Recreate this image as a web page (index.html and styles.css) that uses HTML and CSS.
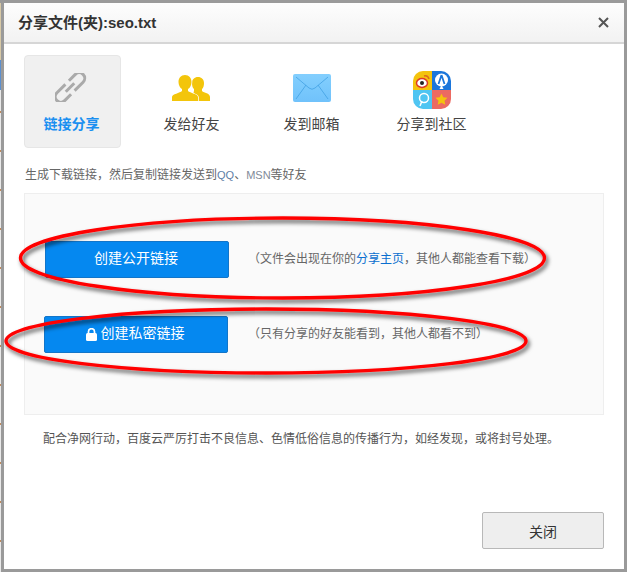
FILE: index.html
```html
<!DOCTYPE html>
<html lang="zh-CN">
<head>
<meta charset="utf-8">
<title>分享文件(夹):seo.txt</title>
<link rel="stylesheet" href="styles.css">
</head>
<body>
<div class="dialog">
  <header class="head">
    <h1 class="title">分享文件(夹):seo.txt</h1>
    <svg class="close" viewBox="0 0 11 11" width="11" height="11"><path d="M1 1l9 9M10 1l-9 9" stroke="#555" stroke-width="2" fill="none"/></svg>
  </header>
  <main class="body">
    <nav class="tabs">
      <div class="tab active">
        <div class="ico-box"><svg class="ico ico-link" width="33" height="29" viewBox="0 0 33 29" fill="none" stroke="#aaa" stroke-width="3"><g transform="translate(15 14.500) rotate(-45)"><path d="M-1 -5.500H-13a5.500 5.500 0 0 0 0 11H-4M1 5.500H13a5.500 5.500 0 0 0 0-11H4M-6 0H6"/></g></svg></div>
        <span class="tab-label">链接分享</span>
      </div>
      <div class="tab">
        <div class="ico-box"><svg class="ico ico-people" width="39" height="26" viewBox="0 0 39 26" fill="#f3c50b"><path d="M22 26v-6c0-2-1-2 0-4v-2c-1.500-1-2-3.500-2-6 0-3.500 2.500-6 6-6s6 2.500 6 6c0 2.500-.5 5-2 6v2c2 2 8 2 8 6v4z"/><path d="M0 26v-4c0-3 8-4 10-6v-2c-2-1-3.500-4-3.500-7C6.500 3 9 0 13 0s6.500 3 6.500 7c0 3-1.500 6-3.500 7v2c2 2 10 3 10 6v4z" stroke="#fff" stroke-width="1.500" paint-order="stroke"/></svg></div>
        <span class="tab-label">发给好友</span>
      </div>
      <div class="tab">
        <div class="ico-box"><svg class="ico ico-mail" width="39" height="28" viewBox="-1 0 39 28"><defs><linearGradient id="m" x1="0" y1="0" x2="0" y2="1"><stop offset="0" stop-color="#83cffe"/><stop offset="1" stop-color="#70c2fb"/></linearGradient></defs><rect width="38" height="28" rx="2" fill="url(#m)"/><path d="M3 3l13 11q3 2.500 6 0L35 3M3 25l10-14M35 25L25 11" fill="none" stroke="#3f9fe2" stroke-width="1" stroke-opacity=".75"/></svg></div>
        <span class="tab-label">发到邮箱</span>
      </div>
      <div class="tab">
        <div class="ico-box"><svg class="ico" width="39" height="38" viewBox="-1 0 39 38">
          <defs><clipPath id="r"><rect width="38" height="38" rx="10"/></clipPath></defs>
          <g clip-path="url(#r)">
            <rect width="19" height="19" fill="#f4c30d"/><rect x="19" width="19" height="19" fill="#1b76db"/>
            <rect y="19" width="19" height="19" fill="#4fc5f2"/><rect x="19" y="19" width="19" height="19" fill="#ec6a62"/>
            <ellipse cx="9" cy="12" rx="5.500" ry="4.500" fill="#fff" stroke="#dc3a28" stroke-width="1.500"/><circle cx="9" cy="12" r="2" fill="#222"/>
            <path d="M11 5q4-1 5 3" stroke="#dc6a1c" stroke-width="1.500" fill="none"/>
            <circle cx="28.500" cy="9" r="6.500" fill="#fff"/><path d="M28.500 14l2 4h-4z" fill="#fff"/><path d="M28.500 4l-3 9M28.500 4l3 9" stroke="#1b76db" stroke-width="1.800" fill="none"/>
            <circle cx="11" cy="27" r="4.500" fill="none" stroke="#fff" stroke-width="1.500"/><path d="M7 35l2-5" stroke="#fff" stroke-width="1.500"/>
            <path d="M28.500 22.500l1.800 3.800 4.200.5-3 2.900.8 4.100-3.800-2-3.800 2 .8-4.100-3-2.900 4.200-.5z" fill="#f4c30d"/>
          </g>
        </svg></div>
        <span class="tab-label">分享到社区</span>
      </div>
    </nav>
    <p class="desc">生成下载链接，然后复制链接发送到<span class="latin q">QQ</span>、<span class="latin m">MSN</span>等好友</p>
    <section class="panel">
      <div class="row row-public">
        <a class="btn"><span class="btn-text">创建公开链接</span></a>
        <span class="note">（文件会出现在你的<span class="link">分享主页</span>，其他人都能查看下载）</span>
      </div>
      <div class="row row-private">
        <a class="btn"><svg class="lock" width="11" height="13" viewBox="0 0 11 13"><path d="M2.500 6V3.500a3 2.800 0 0 1 6 0V6" fill="none" stroke="#fff" stroke-width="1.700"/><rect y="5" width="11" height="8" rx="1.500" fill="#fff"/></svg><span class="btn-text">创建私密链接</span></a>
        <span class="note">（只有分享的好友能看到，其他人都看不到）</span>
      </div>
    </section>
    <p class="notice">配合净网行动，百度云严厉打击不良信息、色情低俗信息的传播行为，如经发现，或将封号处理。</p>
    <footer class="foot"><a class="close-btn">关闭</a></footer>
  </main>
</div>
<svg class="marks" width="627" height="572" viewBox="0 0 627 572" fill="none">
  <defs><filter id="s" x="-5%" y="-20%" width="110%" height="140%"><feDropShadow dx="2" dy="3" stdDeviation="2.200" flood-color="#000" flood-opacity=".65"/></filter></defs>
  <ellipse cx="282.500" cy="258" rx="262" ry="40" stroke="#f00" stroke-width="3.400" filter="url(#s)"/>
  <ellipse cx="266" cy="341" rx="260" ry="32" stroke="#f00" stroke-width="3.400" filter="url(#s)"/>
</svg>
</body>
</html>
```
FILE: styles.css
```css
* { box-sizing: border-box; }
html, body { margin: 0; height: 100%; }
body {
  position: relative;
  width: 627px;
  height: 572px;
  overflow: hidden;
  font-family: "Liberation Sans", "Noto Sans CJK SC", sans-serif;
  padding: 3px 3px 3px 4px;
  background:
    linear-gradient(#9a9a9a 0 3px, #d8c9a6 3px 60px, #5c8fce 60px 90px, transparent 90px) 0 0 / 1px 100% no-repeat,
    linear-gradient(#c08a5c 0 2px, transparent 2px) 0 228px / 1px 39px repeat-y,
    linear-gradient(#e9e9e9, #e9e9e9) 0 0 / 1px 100% no-repeat,
    #9a9a9a;
}
.dialog { width: 620px; height: 566px; background: #fff; display: flex; flex-direction: column; }
.marks { position: absolute; left: 0; top: 0; pointer-events: none; }
.head {
  height: 41px;
  flex: none;
  display: flex;
  align-items: center;
  justify-content: space-between;
  padding: 0 15px 0 14px;
  background: linear-gradient(#fdfdfd, #f2f2f2);
  border-bottom: 2px solid #d6d6d6;
}
.title { margin: 0; padding-bottom: 2px; font-size: 15px; font-weight: bold; color: #333; }
.close { display: block; }
.body { flex: 1; display: flex; flex-direction: column; padding: 11px 20px 20px 20px; }
.tabs { display: flex; gap: 23px; }
.tab {
  width: 97px;
  height: 93px;
  display: flex;
  flex-direction: column;
  align-items: center;
  padding: 15px 2px 0 0;
  border: 1px solid transparent;
  border-radius: 4px;
}
.tab.active { background: #f0f0f0; border-color: #e6e6e6; }
.ico-box { height: 38px; }
.ico { display: block; }
.ico-link { margin-top: 2px; }
.ico-people { margin-top: 4px; }
.ico-mail { margin-top: 3px; }
.tab-label { margin-top: 5px; font-size: 14px; line-height: 20px; color: #444; white-space: nowrap; }
.active .tab-label { color: #1a8ff0; font-weight: bold; }
.desc { margin: 18px 0 0 1px; font-size: 12px; line-height: 18px; color: #666; }
.latin { font-size: 11px; }
.q { color: #5f7fa8; }
.m { color: #7f8a99; }
.panel {
  margin-top: 9px;
  height: 222px;
  background: #fafafa;
  border: 1px solid #eee;
  padding: 47px 0 0 20px;
  display: flex;
  flex-direction: column;
  gap: 38px;
}
.row { display: flex; align-items: center; height: 37px; }
.row-private { margin-left: -1px; }
.btn {
  width: 184px;
  height: 37px;
  display: flex;
  align-items: center;
  justify-content: center;
  gap: 4px;
  padding-right: 2px;
  background: #0588f0;
  border: 1px solid #1275c9;
  border-radius: 2px;
  color: #fff;
  font-size: 14px;
}
.btn-text { padding-bottom: 5px; }
.lock { display: block; }
.note { margin-left: 19px; padding-bottom: 4px; font-size: 12px; color: #666; white-space: nowrap; }
.row-private .note { margin-left: 20px; }
.link { color: #0a6fcf; }
.notice { margin: 15px 0 0 19px; font-size: 12px; line-height: 18px; color: #555; white-space: nowrap; }
.foot { margin-top: auto; display: flex; justify-content: flex-end; }
.close-btn {
  width: 122px;
  height: 37px;
  display: flex;
  align-items: center;
  justify-content: center;
  background: #eee;
  border: 1px solid #b8b8b8;
  border-radius: 2px;
  font-size: 14px;
  color: #333;
}
```
